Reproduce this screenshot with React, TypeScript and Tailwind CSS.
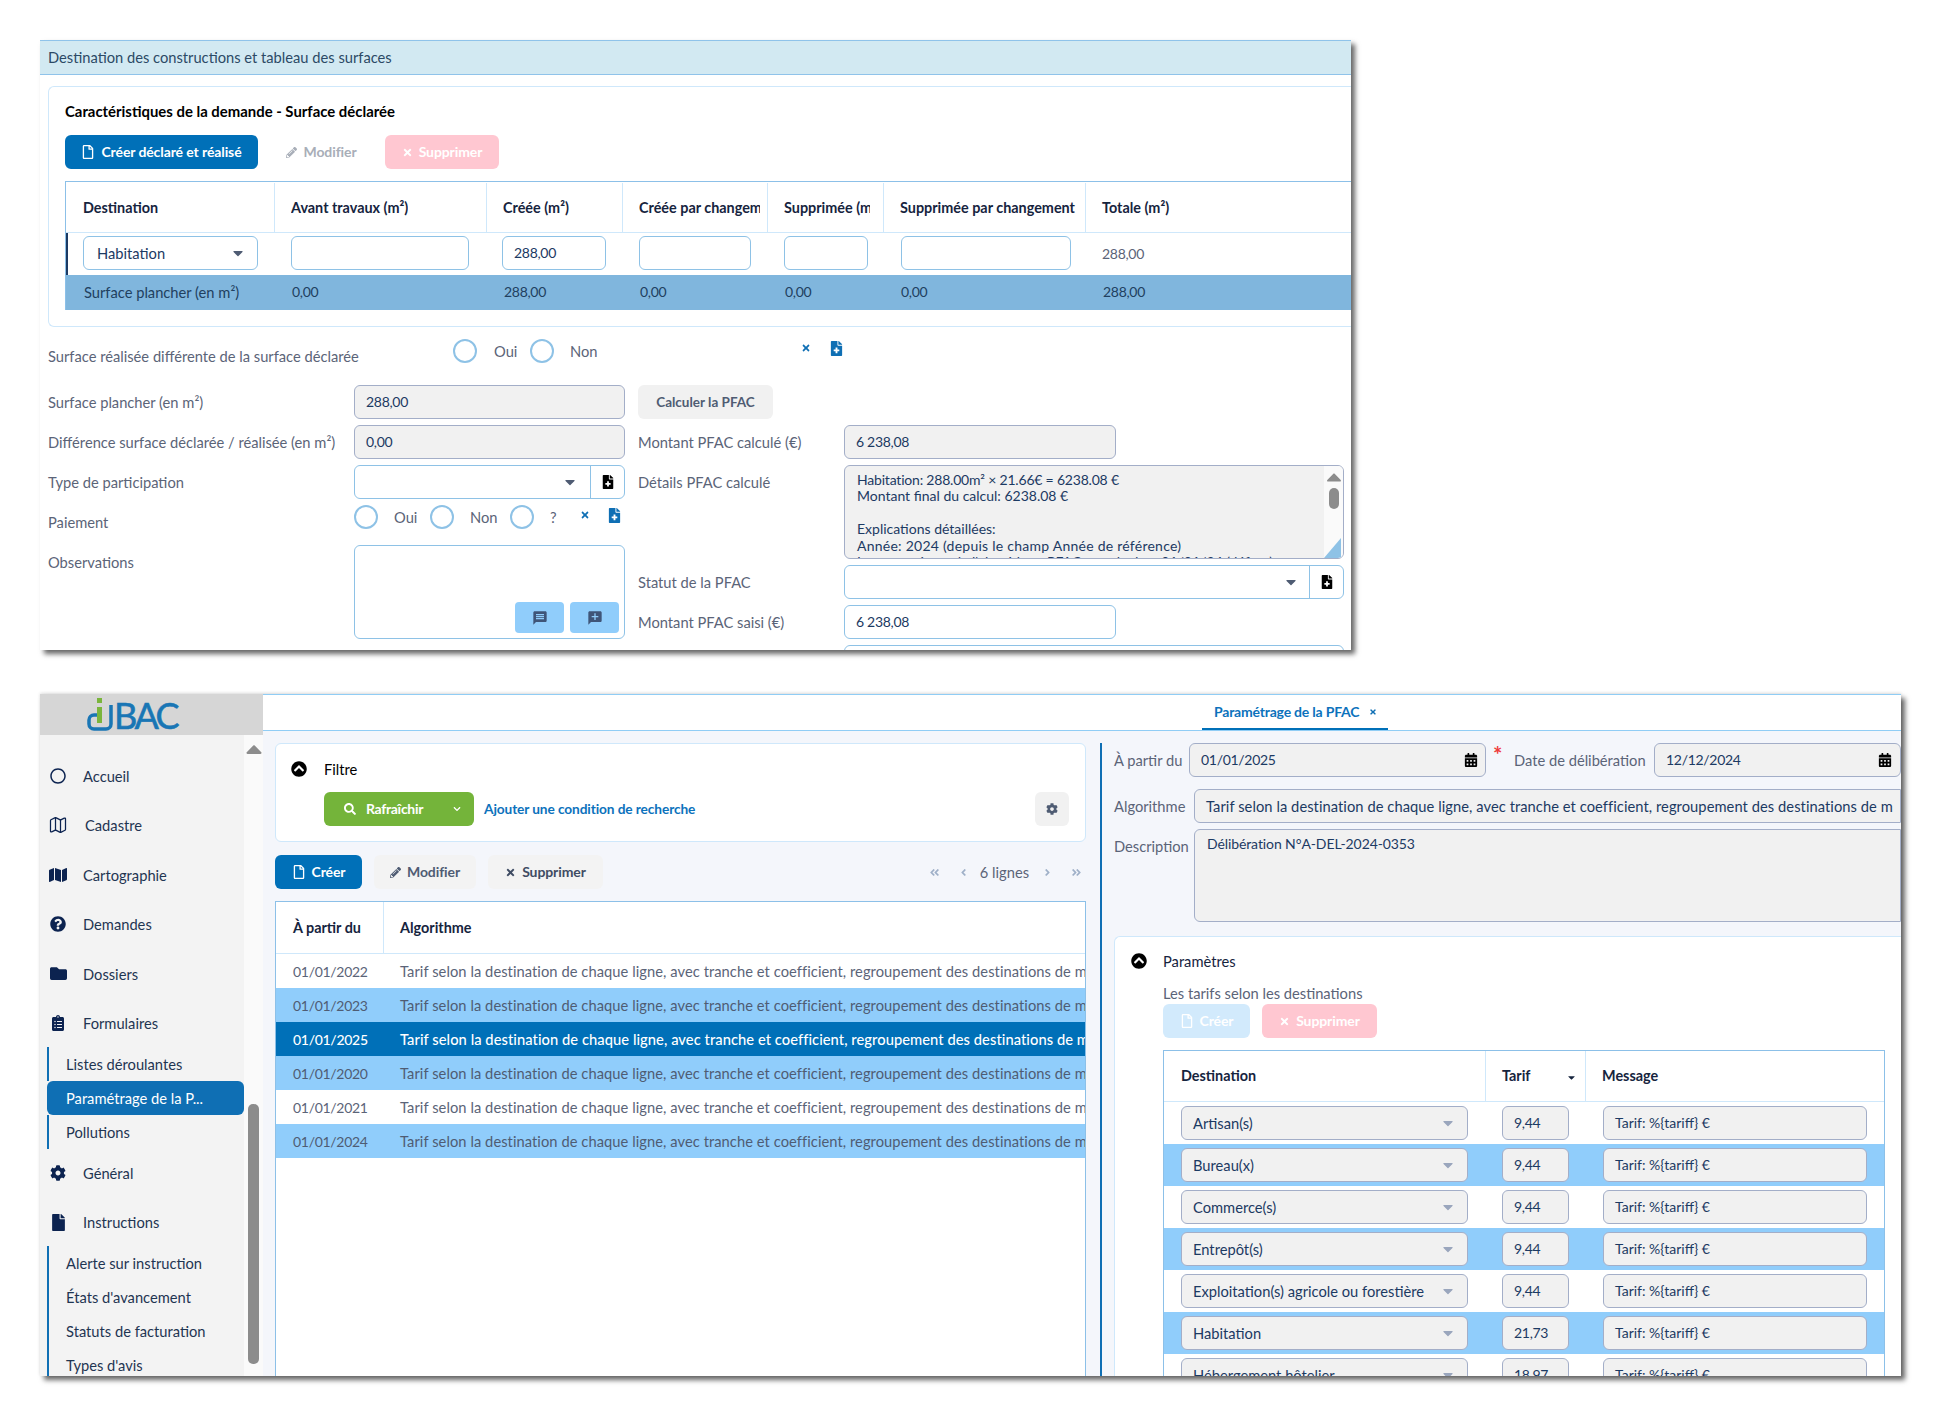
import type { ReactNode } from "react";
import {
  FaAngleDoubleLeft,
  FaAngleDoubleRight,
  FaAngleLeft,
  FaAngleRight,
  FaCalendarAlt,
  FaCaretDown,
  FaCaretUp,
  FaChevronCircleUp,
  FaChevronDown,
  FaClipboardList,
  FaCog,
  FaFile,
  FaFileMedical,
  FaFolder,
  FaMap,
  FaPencilAlt,
  FaQuestionCircle,
  FaRegCircle,
  FaRegFile,
  FaSearch,
  FaTimes,
} from "react-icons/fa";
import { MdMessage } from "react-icons/md";
import { Map as MapOutline } from "lucide-react";

const ALGO =
  "Tarif selon la destination de chaque ligne, avec tranche et coefficient, regroupement des destinations de m";

function Box({
  children,
  grey,
  className = "",
}: {
  children?: ReactNode;
  grey?: boolean;
  className?: string;
}) {
  return (
    <div
      className={`flex h-[34px] items-center overflow-hidden whitespace-nowrap rounded-[6px] border pl-[11px] text-[#1c3a63] ${
        grey ? "border-[#a3aec8] bg-[#f1f1f1]" : "border-[#8ec2e6] bg-white"
      } ${className}`}
    >
      {children}
    </div>
  );
}

function Num({ children }: { children: ReactNode }) {
  return <span className="text-[14px] tracking-[-0.3px]">{children}</span>;
}

function Btn({
  icon,
  label,
  className,
}: {
  icon?: ReactNode;
  label: string;
  className: string;
}) {
  return (
    <div
      className={`flex h-[34px] items-center justify-center gap-[6px] rounded-[6px] text-[14px] font-bold tracking-[-0.1px] ${className}`}
    >
      {icon}
      {label}
    </div>
  );
}

function Radio() {
  return (
    <span className="h-[24px] w-[24px] shrink-0 rounded-full border-2 border-[#8ec2e6] bg-white" />
  );
}

function NavItem({
  icon,
  label,
  tx = 83,
  className = "",
}: {
  icon: ReactNode;
  label: string;
  tx?: number;
  className?: string;
}) {
  return (
    <div className={`relative flex h-[49.5px] items-center text-[#1f3552] ${className}`}>
      <span className="absolute left-[4px] flex w-[28px] justify-center text-[#0c2350]">
        {icon}
      </span>
      <span className={tx === 85 ? "pl-[45px]" : "pl-[43px]"}>{label}</span>
    </div>
  );
}

function SubItem({
  label,
  active,
  className = "",
}: {
  label: string;
  active?: boolean;
  className?: string;
}) {
  return (
    <div
      className={`ml-[7px] flex h-[34px] items-center ${
        active
          ? "rounded-[6px] bg-[#0f6fb4] pl-[19px] text-white"
          : "border-l-2 border-[#0f6fb4] pl-[17px] text-[#1f3552]"
      } ${className}`}
    >
      {label}
    </div>
  );
}

function Sidebar() {
  return (
    <aside className="flex w-[223px] shrink-0 flex-col">
      <div className="flex h-[41px] shrink-0 items-end bg-[#d6d6d6] pb-[3px] pl-[47px]">
        <svg width="27" height="36" viewBox="0 0 27 36" className="shrink-0">
          <path
            d="M24 9V28a5 5 0 0 1-5 5H7a5 5 0 0 1-5-5V24a5 5 0 0 1 5-5h3"
            fill="none"
            stroke="#1976b5"
            strokeWidth="3.5"
          />
          <rect x="10" y="2" width="5" height="5" fill="#7ab53c" />
          <rect x="10" y="11" width="5" height="16" fill="#7ab53c" />
        </svg>
        <span className="text-[36px] leading-[33px] tracking-[-2.5px] text-[#1976b5] [-webkit-text-stroke:0.6px_#1976b5]">
          BAC
        </span>
      </div>
      <div className="flex min-h-0 flex-1">
        <nav className="w-[204px] shrink-0 overflow-hidden bg-[#f3f3f3] pt-[16px]">
          <NavItem icon={<FaRegCircle size={16} />} label="Accueil" />
          <NavItem icon={<MapOutline size={20} strokeWidth={1.5} />} label="Cadastre" tx={85} />
          <NavItem icon={<FaMap size={18} />} label="Cartographie" />
          <NavItem icon={<FaQuestionCircle size={16} />} label="Demandes" />
          <NavItem icon={<FaFolder size={17} />} label="Dossiers" />
          <NavItem icon={<FaClipboardList size={16} />} label="Formulaires" />
          <SubItem label="Listes déroulantes" className="-mt-[1px]" />
          <SubItem label="Paramétrage de la P..." active />
          <SubItem label="Pollutions" />
          <NavItem icon={<FaCog size={16} />} label="Général" className="-mt-[1px]" />
          <NavItem icon={<FaFile size={17} />} label="Instructions" className="-mb-[1px]" />
          <SubItem label="Alerte sur instruction" />
          <SubItem label="États d'avancement" />
          <SubItem label="Statuts de facturation" />
          <SubItem label="Types d'avis" />
        </nav>
        <div className="flex w-[19px] flex-col items-center bg-[#fafafa] pt-[1px]">
          <FaCaretUp size={26} className="text-[#8c8c8c]" />
          <div className="mt-[342px] h-[260px] w-[11px] shrink-0 rounded-[5px] bg-[#8c8c8c]" />
        </div>
      </div>
    </aside>
  );
}

function ListPanel() {
  const rows = [
    ["01/01/2022", "bg-white text-[#5b6478]"],
    ["01/01/2023", "bg-[#90cdfb] text-[#4f5c73]"],
    ["01/01/2025", "bg-[#0070b8] text-white font-medium"],
    ["01/01/2020", "bg-[#90cdfb] text-[#4f5c73]"],
    ["01/01/2021", "bg-white text-[#5b6478]"],
    ["01/01/2024", "bg-[#90cdfb] text-[#4f5c73]"],
  ];
  return (
    <section className="flex w-[837px] shrink-0 flex-col pl-[12px] pr-[14px]">
      <div className="h-[99px] shrink-0 rounded-[6px] border border-[#cfe8fb] bg-white pl-[15px] pr-[16px] pt-[13px]">
        <div className="flex h-[24px] items-center gap-[17px] text-black">
          <FaChevronCircleUp size={16} />
          <span>Filtre</span>
        </div>
        <div className="mt-[11px] flex items-center pl-[33px]">
          <div className="flex h-[34px] w-[150px] items-center rounded-[6px] bg-[#74b43a] pl-[20px] text-[14px] font-bold text-white">
            <FaSearch size={12} />
            <span className="ml-[10px] tracking-[-0.3px]">Rafraîchir</span>
            <FaChevronDown size={8} className="ml-auto mr-[13px]" />
          </div>
          <span className="ml-[10px] text-[13.700px] font-bold tracking-[-0.1px] text-[#0c72bc]">
            Ajouter une condition de recherche
          </span>
          <div className="ml-auto flex h-[34px] w-[34px] items-center justify-center rounded-[6px] bg-[#f1f1f1] text-[#4f5c73]">
            <FaCog size={12} />
          </div>
        </div>
      </div>
      <div className="mt-[13px] flex h-[34px] shrink-0 items-center gap-[12px]">
        <Btn
          icon={<FaRegFile size={14} />}
          label="Créer"
          className="w-[87px] bg-[#0070b8] text-white"
        />
        <Btn
          icon={<FaPencilAlt size={11} />}
          label="Modifier"
          className="w-[102px] bg-[#f3f3f3] text-[#4f5c73]"
        />
        <Btn
          icon={<FaTimes size={11} />}
          label="Supprimer"
          className="w-[115px] bg-[#f3f3f3] text-[#3f4c63]"
        />
        <div className="ml-auto flex items-center pr-[4px] text-[#5b6478]">
          <FaAngleDoubleLeft size={11} className="text-[#9fb0c8]" />
          <FaAngleLeft size={11} className="ml-[18px] text-[#9fb0c8]" />
          <span className="ml-[11px]">6 lignes</span>
          <FaAngleRight size={11} className="ml-[13px] text-[#9fb0c8]" />
          <FaAngleDoubleRight size={11} className="ml-[18px] text-[#9fb0c8]" />
        </div>
      </div>
      <div className="mt-[12px] min-h-0 flex-1 overflow-hidden border-x border-t border-[#8cc0e8] bg-white">
        <div className="flex h-[52px] items-center border-b border-[#cfe8fb] text-[14.400px] font-bold text-[#16243e]">
          <div className="flex h-full w-[108px] items-center border-r border-[#cfe8fb] pl-[17px]">
            À partir du
          </div>
          <div className="pl-[16px]">Algorithme</div>
        </div>
        {rows.map(([date, cls]) => (
          <div
            key={date}
            className={`flex h-[34px] items-center overflow-hidden whitespace-nowrap ${cls}`}
          >
            <span className="w-[108px] shrink-0 pl-[17px]">
              <Num>{date}</Num>
            </span>
            <span className="pl-[16px] tracking-[0.06px]">{ALGO}</span>
          </div>
        ))}
      </div>
    </section>
  );
}

function Select({
  children,
  className = "",
}: {
  children?: ReactNode;
  className?: string;
}) {
  return (
    <Box grey className={`justify-between pr-[11px] ${className}`}>
      <span>{children}</span>
      <FaCaretDown size={16} className="text-[#9aa6bd]" />
    </Box>
  );
}

function RateRow({ name, tarif, blue }: { name: string; tarif: string; blue?: boolean }) {
  return (
    <div
      className={`flex h-[42px] shrink-0 items-center pl-[17px] ${blue ? "bg-[#90cdfb]" : "bg-white"}`}
    >
      <Select className="w-[287px]">{name}</Select>
      <Box grey className="ml-[34px] w-[67px]">
        <Num>{tarif}</Num>
      </Box>
      <Box grey className="ml-[34px] w-[264px]">
        <span className="text-[14px]">{"Tarif: %{tariff} €"}</span>
      </Box>
    </div>
  );
}

function DetailPanel() {
  return (
    <section className="min-w-0 flex-1 overflow-hidden border-l-2 border-[#0f6fb4] pl-[12px] text-[#5b6478]">
      <div className="flex items-center">
        <span className="w-[75px] shrink-0">À partir du</span>
        <Box grey className="w-[297px] justify-between pr-[7px]">
          <Num>01/01/2025</Num>
          <FaCalendarAlt size={14} className="text-black" />
        </Box>
        <span className="ml-[7px] w-[21px] -translate-y-[5px] text-[22px] font-bold leading-none text-[#ef3b3b]">
          *
        </span>
        <span className="w-[140px] shrink-0">Date de délibération</span>
        <Box grey className="min-w-0 flex-1 justify-between pr-[8px]">
          <Num>12/12/2024</Num>
          <FaCalendarAlt size={14} className="text-black" />
        </Box>
      </div>
      <div className="mt-[12px] flex items-center">
        <span className="w-[80px] shrink-0">Algorithme</span>
        <Box grey className="min-w-0 flex-1 rounded-r-none tracking-[0.06px]">
          {ALGO}
        </Box>
      </div>
      <div className="mt-[6px] flex">
        <span className="w-[80px] shrink-0 pt-[7px]">Description</span>
        <div className="h-[93px] min-w-0 flex-1 rounded-[6px] rounded-r-none border border-[#a3aec8] bg-[#f1f1f1] pl-[12px] pt-[4px] text-[14px] tracking-[-0.1px] text-[#1c3a63]">
          Délibération N°A-DEL-2024-0353
        </div>
      </div>
      <div className="mt-[14px] h-[500px] rounded-tl-[6px] border-l border-t border-[#cfe8fb] bg-white pl-[48px]">
        <div className="relative flex h-[24px] translate-y-[12px] items-center text-[#16243e]">
          <FaChevronCircleUp size={16} className="absolute -left-[32px] text-black" />
          Paramètres
        </div>
        <div className="pt-[22px] leading-[20px]">Les tarifs selon les destinations</div>
        <div className="mt-[1px] flex gap-[12px]">
          <Btn
            icon={<FaRegFile size={14} />}
            label="Créer"
            className="w-[87px] bg-[#d2eafc] text-white"
          />
          <Btn
            icon={<FaTimes size={11} />}
            label="Supprimer"
            className="w-[115px] bg-[#ffc7d1] text-white"
          />
        </div>
        <div className="mt-[12px] flex w-[722px] flex-col border-x border-t border-[#8cc0e8]">
          <div className="flex h-[51px] shrink-0 items-center border-b border-[#cfe8fb] text-[14.400px] font-bold text-[#16243e]">
            <div className="flex h-full w-[322px] items-center border-r border-[#cfe8fb] pl-[17px]">
              Destination
            </div>
            <div className="flex h-full w-[100px] items-center justify-between border-r border-[#cfe8fb] pl-[16px] pr-[8px]">
              Tarif
              <FaCaretDown size={11} className="mt-[3px] text-[#16243e]" />
            </div>
            <div className="pl-[16px]">Message</div>
          </div>
          <RateRow name="Artisan(s)" tarif="9,44" />
          <RateRow name="Bureau(x)" tarif="9,44" blue />
          <RateRow name="Commerce(s)" tarif="9,44" />
          <RateRow name="Entrepôt(s)" tarif="9,44" blue />
          <RateRow name="Exploitation(s) agricole ou forestière" tarif="9,44" />
          <RateRow name="Habitation" tarif="21,73" blue />
          <RateRow name="Hébergement hôtelier" tarif="18,97" />
        </div>
      </div>
    </section>
  );
}

function SurfaceTable() {
  const cols = [
    ["Destination", "w-[209px]"],
    ["Avant travaux (m²)", "w-[212px]"],
    ["Créée (m²)", "w-[136px]"],
    ["Créée par changement (m²)", "w-[145px]"],
    ["Supprimée (m²)", "w-[116px]"],
    ["Supprimée par changement (m²)", "w-[202px]"],
  ];
  const values = ["0,00", "288,00", "0,00", "0,00", "0,00", "288,00"];
  return (
    <div className="mt-[12px] border-t border-l border-[#8cc0e8]">
      <div className="flex h-[51px] border-b border-[#cfe8fb] pt-[1px] text-[14.400px] font-bold text-[#16243e]">
        {cols.map(([label, w], i) => (
          <div
            key={label}
            className={`flex shrink-0 items-center whitespace-nowrap border-r border-[#cfe8fb] ${
              i === 0 ? "pl-[17px]" : "pl-[16px]"
            } ${i === 4 ? "pr-[13px]" : "pr-[7px]"} ${w}`}
          >
            <span className="overflow-hidden">{label}</span>
          </div>
        ))}
        <div className="flex items-center pl-[16px]">Totale (m²)</div>
      </div>
      <div className="flex h-[42px] items-start border-l-2 border-[#1c3a63] pl-[15px] pt-[3px] text-[#1c3a63]">
        <Box className="w-[175px] justify-between pl-[13px] pr-[11px]">
          <span>Habitation</span>
          <FaCaretDown size={16} className="text-[#4f5c73]" />
        </Box>
        <Box className="ml-[33px] w-[178px]" />
        <Box className="ml-[33px] w-[104px]">
          <Num>288,00</Num>
        </Box>
        <Box className="ml-[33px] w-[112px]" />
        <Box className="ml-[33px] w-[84px]" />
        <Box className="ml-[33px] w-[170px]" />
        <span className="ml-[31px] self-center pb-[3px] text-[14px] tracking-[-0.3px] text-[#5b6478]">
          288,00
        </span>
      </div>
      <div className="flex h-[35px] items-center bg-[#80b6dd] pb-[2px] text-[#21405f]">
        <span className="w-[209px] shrink-0 pl-[18px]">Surface plancher (en m²)</span>
        <span className="w-[212px] shrink-0 pl-[17px]"><Num>{values[0]}</Num></span>
        <span className="w-[136px] shrink-0 pl-[17px]"><Num>{values[1]}</Num></span>
        <span className="w-[145px] shrink-0 pl-[17px]"><Num>{values[2]}</Num></span>
        <span className="w-[116px] shrink-0 pl-[17px]"><Num>{values[3]}</Num></span>
        <span className="w-[202px] shrink-0 pl-[17px]"><Num>{values[4]}</Num></span>
        <span className="pl-[17px]"><Num>{values[5]}</Num></span>
      </div>
    </div>
  );
}

function TopWindow() {
  return (
    <div className="h-[610px] w-[1311px] overflow-hidden bg-white text-[#5b6478] shadow-[4px_4px_5px_rgba(0,0,0,0.6)]">
      <div className="flex h-[35px] items-center border-y border-[#8fc3ea] bg-[#d2e9f2] pb-[1px] pl-[8px] text-[#2c4a66]">
        Destination des constructions et tableau des surfaces
      </div>
      <div className="ml-[8px] mt-[11px] h-[241px] rounded-l-[6px] border-y border-l border-[#cfe8fb] pl-[16px] pt-[14px]">
        <div className="h-[22px] text-[14.900px] font-bold leading-[21px] text-black">
          Caractéristiques de la demande - Surface déclarée
        </div>
        <div className="mt-[12px] flex items-center">
          <Btn
            icon={<FaRegFile size={14} />}
            label="Créer déclaré et réalisé"
            className="w-[193px] bg-[#0070b8] text-white"
          />
          <Btn
            icon={<FaPencilAlt size={11} />}
            label="Modifier"
            className="ml-[6px] w-[115px] text-[#a8aeb8]"
          />
          <Btn
            icon={<FaTimes size={11} />}
            label="Supprimer"
            className="ml-[6px] w-[114px] bg-[#ffc7d1] text-white"
          />
        </div>
        <SurfaceTable />
      </div>
      <div className="relative h-[58px] pl-[8px]">
        <span className="absolute top-[19px]">Surface réalisée différente de la surface déclarée</span>
        <div className="ml-[405px] flex items-center pt-[12px]">
          <Radio />
          <span className="ml-[17px] w-[36px]">Oui</span>
          <Radio />
          <span className="ml-[16px]">Non</span>
          <FaTimes size={10} className="ml-[203px] -translate-y-[3px] text-[#0f6fb4]" />
          <FaFileMedical size={15} className="ml-[18px] -translate-y-[3px] text-[#0f6fb4]" />
        </div>
      </div>
      <div className="flex pl-[8px]">
        <div className="flex w-[590px] shrink-0 flex-col gap-[6px]">
          <div className="flex items-center">
            <span className="w-[306px] shrink-0">Surface plancher (en m²)</span>
            <Box grey className="w-[271px]"><Num>288,00</Num></Box>
          </div>
          <div className="flex items-center">
            <span className="w-[306px] shrink-0">Différence surface déclarée / réalisée (en m²)</span>
            <Box grey className="w-[271px]"><Num>0,00</Num></Box>
          </div>
          <div className="flex items-center">
            <span className="w-[306px] shrink-0">Type de participation</span>
            <Box className="w-[271px]">
              <span className="flex-1" />
              <FaCaretDown size={16} className="mr-[12px] text-[#4f5c73]" />
              <span className="flex h-full w-[34px] items-center justify-center border-l border-[#8ec2e6]">
                <FaFileMedical size={14} className="text-black" />
              </span>
            </Box>
          </div>
          <div className="flex h-[34px] items-start">
            <span className="w-[306px] shrink-0 pt-[7px]">Paiement</span>
            <div className="flex items-center">
              <Radio />
              <span className="ml-[16px] w-[36px]">Oui</span>
              <Radio />
              <span className="ml-[16px] w-[40px]">Non</span>
              <Radio />
              <span className="ml-[16px]">?</span>
              <FaTimes size={10} className="ml-[23px] -translate-y-[2px] text-[#0f6fb4]" />
              <FaFileMedical size={15} className="ml-[17px] -translate-y-[2px] text-[#0f6fb4]" />
            </div>
          </div>
          <div className="flex">
            <span className="w-[306px] shrink-0 pt-[7px]">Observations</span>
            <div className="flex h-[94px] w-[271px] items-end justify-end gap-[6px] rounded-[6px] border border-[#8ec2e6] bg-white pb-[5px] pr-[5px]">
              <div className="flex h-[31px] w-[49px] items-center justify-center rounded-[4px] bg-[#90cdfb] text-[#3f5578]">
                <MdMessage size={16} />
              </div>
              <div className="flex h-[31px] w-[49px] items-center justify-center rounded-[4px] bg-[#90cdfb] text-[#3f5578]">
                <svg width="16" height="16" viewBox="0 0 24 24" fill="currentColor">
                  <path d="M20 2H4c-1.100 0-2 .9-2 2v18l4-4h14c1.100 0 2-.9 2-2V4c0-1.100-.9-2-2-2zm-3 9h-4v4h-2v-4H7V9h4V5h2v4h4v2z" />
                </svg>
              </div>
            </div>
          </div>
        </div>
        <div className="flex w-[706px] shrink-0 flex-col gap-[6px]">
          <div className="flex h-[34px] w-[135px] items-center justify-center rounded-[6px] bg-[#f1f1f1] text-[13.500px] font-bold text-[#4f5c73]">
            Calculer la PFAC
          </div>
          <div className="flex items-center">
            <span className="w-[206px] shrink-0">Montant PFAC calculé (€)</span>
            <Box grey className="w-[272px]"><Num>6 238,08</Num></Box>
          </div>
          <div className="flex">
            <span className="w-[206px] shrink-0 pt-[7px]">Détails PFAC calculé</span>
            <div className="flex h-[94px] w-[500px] overflow-hidden rounded-[6px] border border-[#a3aec8] bg-[#f1f1f1] text-[14px] text-[#1c3a63]">
              <div className="min-w-0 flex-1 overflow-hidden whitespace-nowrap pl-[12px] pt-[6px] leading-[16.400px]">
                <div className="tracking-[-0.2px]">Habitation: 288.00m² × 21.66€ = 6238.08 €</div>
                <div>Montant final du calcul: 6238.08 €</div>
                <div>&nbsp;</div>
                <div>Explications détaillées:</div>
                <div className="tracking-[0.25px]">Année: 2024 (depuis le champ Année de référence)</div>
                <div>Les paramètres de l'algorithme PFAC pour la date 01/01/24 (défaut)</div>
              </div>
              <div className="relative flex w-[19px] shrink-0 flex-col items-center bg-[#fafafa]">
                <FaCaretUp size={24} className="-my-[1px] text-[#8c8c8c]" />
                <div className="h-[21px] w-[10px] rounded-[5px] bg-[#8c8c8c]" />
                <svg width="17" height="20" viewBox="0 0 17 20" className="absolute bottom-0 right-[2px]">
                  <path d="M0 20L17 0V20Z" fill="#8ec2e6" />
                </svg>
              </div>
            </div>
          </div>
          <div className="flex items-center">
            <span className="w-[206px] shrink-0">Statut de la PFAC</span>
            <Box className="w-[500px]">
              <span className="flex-1" />
              <FaCaretDown size={16} className="mr-[10px] text-[#4f5c73]" />
              <span className="flex h-full w-[34px] items-center justify-center border-l border-[#8ec2e6]">
                <FaFileMedical size={14} className="text-black" />
              </span>
            </Box>
          </div>
          <div className="flex items-center">
            <span className="w-[206px] shrink-0">Montant PFAC saisi (€)</span>
            <Box className="w-[272px]"><Num>6 238,08</Num></Box>
          </div>
          <div className="ml-[206px]">
            <Box className="w-[500px]" />
          </div>
        </div>
      </div>
    </div>
  );
}

function BottomWindow() {
  return (
    <div className="mt-[44px] flex h-[682px] w-[1861px] overflow-hidden bg-[#f4f6fb] shadow-[4px_4px_5px_rgba(0,0,0,0.6),0_-1px_3px_rgba(0,0,0,0.12)]">
      <Sidebar />
      <main className="flex min-w-0 flex-1 flex-col">
        <div className="flex h-[37px] shrink-0 border-y border-[#90cdf5] bg-white">
          <div className="ml-[939px] flex w-[186px] items-center gap-[10px] border-b-2 border-[#0070b8] pl-[12px] text-[14px] font-bold tracking-[-0.2px] text-[#0c72bc]">
            Paramétrage de la PFAC
            <FaTimes size={8} className="text-[#0f6fb4]" />
          </div>
        </div>
        <div className="flex min-h-0 flex-1 pt-[12px]">
          <ListPanel />
          <DetailPanel />
        </div>
      </main>
    </div>
  );
}

export default function App() {
  return (
    <div className="min-h-[1416px] bg-white pl-[40px] pt-[40px] text-[14.700px] leading-[20px] [font-family:Lato,sans-serif]">
      <TopWindow />
      <BottomWindow />
    </div>
  );
}
